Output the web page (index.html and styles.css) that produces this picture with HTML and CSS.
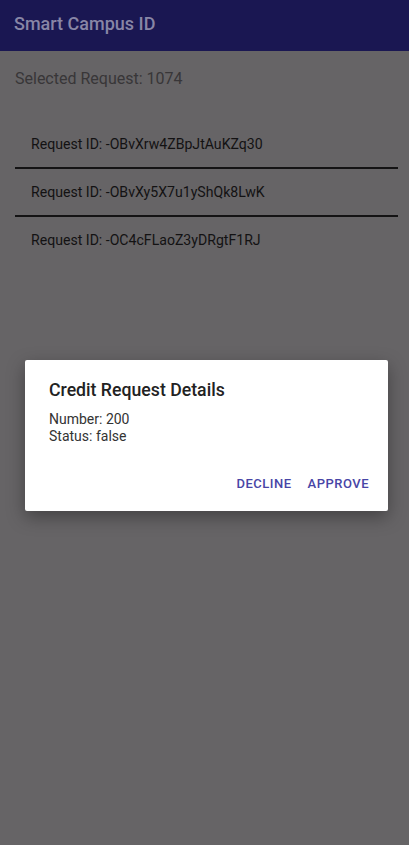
FILE: index.html
```html
<!DOCTYPE html>
<html>
<head>
<meta charset="utf-8">
<link rel="stylesheet" href="styles.css">
</head>
<body>
<div class="screen">
  <header class="appbar">Smart Campus ID</header>
  <main class="content">
    <p class="selected">Selected Request: 1074</p>
    <ul class="list">
      <li class="item">Request ID: -OBvXrw4ZBpJtAuKZq30</li>
      <li class="divider"></li>
      <li class="item">Request ID: -OBvXy5X7u1yShQk8LwK</li>
      <li class="divider"></li>
      <li class="item">Request ID: -OC4cFLaoZ3yDRgtF1RJ</li>
    </ul>
  </main>
  <div class="dialog">
    <h2 class="dialog-title">Credit Request Details</h2>
    <div class="dialog-body">
      <div>Number: 200</div>
      <div>Status: false</div>
    </div>
    <div class="dialog-actions">
      <button class="btn">DECLINE</button>
      <button class="btn">APPROVE</button>
    </div>
  </div>
</div>
</body>
</html>
```
FILE: styles.css
```css
* { box-sizing: border-box; }
html, body { margin: 0; padding: 0; }
body {
  font-family: Roboto, "Noto Sans", sans-serif;
  background: #666466;
}
.screen {
  position: relative;
  width: 409px;
  height: 845px;
  background: #666466;
  overflow: hidden;
}
.appbar {
  height: 51px;
  background: #1a1752;
  color: #8886a6;
  font-size: 18px;
  font-weight: 500;
  display: flex;
  align-items: center;
  padding: 0 0 4px 14px;
}
.content {
  padding: 18px 11px 0 15px;
}
.selected {
  margin: 0;
  font-size: 16px;
  line-height: 19px;
  color: #383638;
}
.list {
  list-style: none;
  margin: 33px 0 0 0;
  padding: 0;
}
.item {
  height: 46px;
  display: flex;
  align-items: center;
  padding-left: 16px;
  font-size: 14.1px;
  color: #131213;
}
.divider {
  height: 2px;
  background: #141314;
}
.dialog {
  position: absolute;
  left: 25px;
  top: 360px;
  width: 363px;
  height: 151px;
  background: #ffffff;
  border-radius: 2px;
  box-shadow: 0 6px 18px rgba(0,0,0,0.35);
  padding: 18px 19px 0 24px;
  display: flex;
  flex-direction: column;
}
.dialog-title {
  margin: 0;
  font-size: 17.7px;
  line-height: 24px;
  font-weight: 500;
  color: #222222;
}
.dialog-body {
  margin-top: 9px;
  font-size: 14px;
  line-height: 17px;
  color: #333333;
}
.dialog-actions {
  margin-top: 25px;
  display: flex;
  justify-content: flex-end;
}
.btn {
  font-family: Roboto, "Noto Sans", sans-serif;
  background: none;
  border: none;
  padding: 6px 0 6px 16px;
  font-size: 13px;
  font-weight: 500;
  letter-spacing: 0.5px;
  color: #4845a6;
  line-height: 16px;
}
```
